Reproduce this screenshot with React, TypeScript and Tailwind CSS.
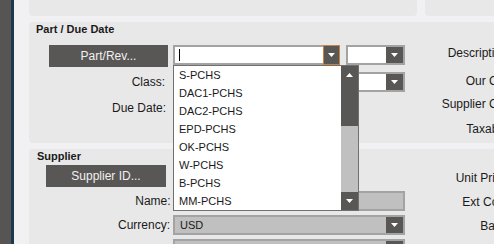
import React from "react";

const items = [
  "S-PCHS",
  "DAC1-PCHS",
  "DAC2-PCHS",
  "EPD-PCHS",
  "OK-PCHS",
  "W-PCHS",
  "B-PCHS",
  "MM-PCHS",
];

function Tri({ up = false }: { up?: boolean }) {
  return (
    <svg width="7" height="4" viewBox="0 0 7 4">
      <polygon points={up ? "0,4 7,4 3.5,0" : "0,0 7,0 3.5,4"} fill="#ffffff" />
    </svg>
  );
}

function DropBtn({ orange = false }: { orange?: boolean }) {
  return (
    <div
      className={`flex h-full w-[17px] shrink-0 items-center justify-center bg-[#595755] ${
        orange ? "border border-[#c8813e]" : ""
      }`}
    >
      <Tri />
    </div>
  );
}

function Select({
  w,
  gray = false,
  value,
}: {
  w: string;
  gray?: boolean;
  value?: string;
}) {
  return (
    <div
      className={`flex h-[20px] ${w} items-center border-2 border-[#a3a3a3] ${
        gray ? "bg-[#c0c0c0]" : "bg-white"
      }`}
    >
      <div className="flex-1 pl-[5px] text-[11px] leading-[14px] text-[#1a1a1a]">
        {value}
      </div>
      <DropBtn />
    </div>
  );
}

function PartCombo() {
  return (
    <div className="relative z-10 flex h-[20px] w-[167px]">
      <div className="flex flex-1 items-center border-2 border-r-0 border-[#a3a3a3] bg-white pl-[4px]">
        <div className="h-[12px] w-px bg-black" />
      </div>
      <DropBtn orange />

      {/* open list */}
      <div className="absolute left-0 top-full flex h-[146px] w-[186px] border border-[#707070] bg-white">
        <div className="flex-1">
          {items.map((it) => (
            <div
              key={it}
              className="h-[18px] pl-[5px] text-[11px] leading-[18px] text-[#1a1a1a]"
            >
              {it}
            </div>
          ))}
        </div>
        <div className="flex w-[17px] flex-col">
          <div className="flex h-[18px] items-center justify-center bg-[#595755]">
            <Tri up />
          </div>
          <div className="h-[42px] bg-[#595755]" />
          <div className="flex-1 bg-[#c0c0c0]" />
          <div className="flex h-[18px] items-center justify-center bg-[#595755]">
            <Tri />
          </div>
        </div>
      </div>
    </div>
  );
}

export default function App() {
  return (
    <div className="flex h-[244px] w-[494px] overflow-hidden bg-[#f1f1f3] font-['Liberation_Sans',Arial,sans-serif] text-[12px] text-[#1a1a1a]">
      <div className="w-[11px] shrink-0 bg-[#575553]" />
      <div className="w-[3px] shrink-0 bg-[#1b3a50]" />

      <div className="flex w-[520px] shrink-0 flex-col gap-[6px] pl-[15px]">
        {/* top strip */}
        <div className="flex h-[16px] shrink-0 gap-[8px]">
          <div className="w-[388px] rounded-b-[4px] bg-[#e8e8e8]" />
          <div className="flex-1 rounded-b-[4px] bg-[#e8e8e8]" />
        </div>

        {/* Part / Due Date */}
        <div className="relative z-10 flex h-[121px] shrink-0 rounded-l-[4px] bg-[#e8e8e8]">
          <div className="flex w-[376px] flex-col">
            <div className="h-[14px] pl-[7px] text-[11px] font-bold leading-[14px]">
              Part / Due Date
            </div>
            <div className="mt-[9px] flex items-start">
              <div className="ml-[20px] flex h-[22px] w-[120px] items-center justify-center bg-[#595755] text-[#f0f0f0]">
                Part/Rev...
              </div>
              <div className="ml-[5px]">
                <PartCombo />
              </div>
              <div className="ml-[6px]">
                <Select w="w-[59px]" />
              </div>
            </div>
            <div className="mt-[5px] flex items-center">
              <div className="w-[137px] text-right leading-[14px]">Class:</div>
              <div className="ml-[8px]">
                <Select w="w-[232px]" />
              </div>
            </div>
            <div className="mt-[6px] flex items-center">
              <div className="w-[137px] text-right leading-[14px]">Due Date:</div>
              <div className="ml-[8px] h-[20px] w-[120px] border-2 border-[#a3a3a3] bg-white" />
            </div>
          </div>
          <div className="flex w-[106px] flex-col text-right leading-[14px]">
            <div className="mt-[24px]">Description:</div>
            <div className="mt-[14px]">Our Cat:</div>
            <div className="mt-[9px]">Supplier Cat:</div>
            <div className="mt-[11px]">Taxable:</div>
          </div>
        </div>

        {/* Supplier */}
        <div className="flex h-[120px] shrink-0 rounded-l-[4px] bg-[#e8e8e8]">
          <div className="flex w-[376px] flex-col">
            <div className="h-[14px] pl-[8px] text-[11px] font-bold leading-[14px]">
              Supplier
            </div>
            <div className="ml-[17px] mt-[2px] flex h-[22px] w-[120px] items-center justify-center bg-[#595755] text-[#f0f0f0]">
              Supplier ID...
            </div>
            <div className="mt-[4px] flex items-center">
              <div className="w-[142px] text-right leading-[14px]">Name:</div>
              <div className="ml-[3px] h-[20px] w-[232px] border-2 border-[#a3a3a3] bg-[#c0c0c0]" />
            </div>
            <div className="mt-[4px] flex items-center">
              <div className="w-[142px] text-right leading-[14px]">Currency:</div>
              <div className="ml-[3px]">
                <Select w="w-[232px]" gray value="USD" />
              </div>
            </div>
            <div className="mt-[4px] flex items-center">
              <div className="w-[142px]" />
              <div className="ml-[3px]">
                <Select w="w-[232px]" gray />
              </div>
            </div>
          </div>
          <div className="flex w-[106px] flex-col text-right leading-[14px]">
            <div className="mt-[22px]">Unit Price:</div>
            <div className="mt-[10px]">Ext Cost:</div>
            <div className="mt-[10px]">Base:</div>
          </div>
        </div>
      </div>
    </div>
  );
}
